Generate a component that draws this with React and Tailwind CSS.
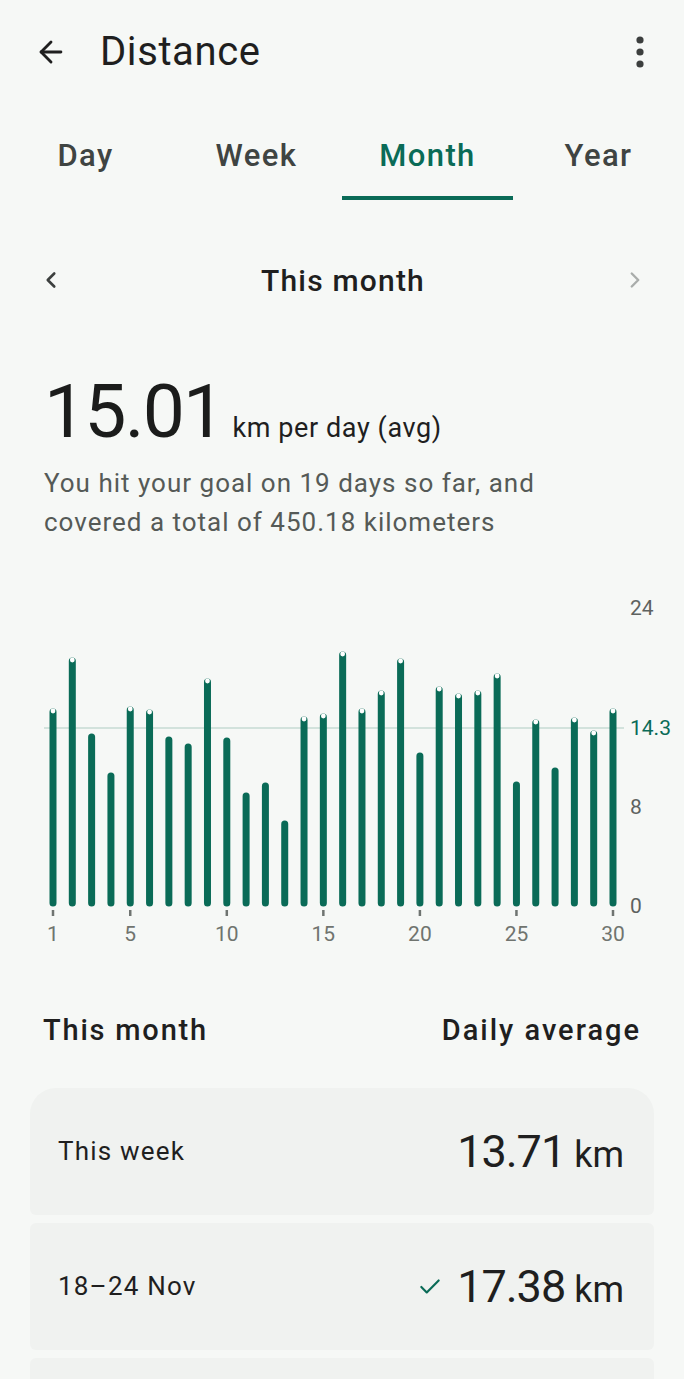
import { ArrowLeft, ChevronLeft, ChevronRight, Check } from 'lucide-react';

const FONT = { fontFamily: 'Roboto, "Open Sans", Arial, sans-serif' };

// tops of each day's bar, in page pixels (0 km sits at y=905)
const tops = [
  709, 658, 734, 773, 707, 710, 737, 744, 679, 738,
  793, 783, 821, 717, 714, 652, 709, 691, 659, 753,
  687, 694, 691, 674, 782, 720, 768, 718, 731, 709,
];
const goalDays = [1, 2, 5, 6, 9, 14, 15, 16, 17, 18, 19, 21, 22, 23, 24, 26, 28, 29, 30];

function Chart() {
  const x = (i) => 53 + i * (560 / 29);
  return (
    <svg width="684" height="360" viewBox="0 590 684 360" className="block">
      <line x1="44" y1="728" x2="624" y2="728" stroke="#d2e2dc" strokeWidth="2" />
      {tops.map((t, i) => (
        <g key={i}>
          <line x1={x(i)} y1="903" x2={x(i)} y2={t + 3} stroke="#0a6b57" strokeWidth="7" strokeLinecap="round" />
          {goalDays.includes(i + 1) && <circle cx={x(i)} cy={t + 2} r="2.4" fill="#ffffff" />}
        </g>
      ))}
      {[1, 5, 10, 15, 20, 25, 30].map((d) => (
        <g key={d}>
          <line x1={x(d - 1)} y1="910" x2={x(d - 1)} y2="916" stroke="#6f7471" strokeWidth="2.5" />
          <text x={x(d - 1)} y="935" textAnchor="middle" dominantBaseline="middle" fontSize="21" fill="#70746f" style={FONT}>
            {d}
          </text>
        </g>
      ))}
      <text x="630" y="609" dominantBaseline="middle" fontSize="21" fill="#5e625f" style={FONT}>24</text>
      <text x="630" y="729" dominantBaseline="middle" fontSize="21" fill="#0a6b57" style={FONT}>14.3</text>
      <text x="630" y="808" dominantBaseline="middle" fontSize="21" fill="#5e625f" style={FONT}>8</text>
      <text x="630" y="907" dominantBaseline="middle" fontSize="21" fill="#5e625f" style={FONT}>0</text>
    </svg>
  );
}

function WeekRow({ label, value, done, top }) {
  return (
    <div
      className={`flex items-center justify-between h-[127px] pl-[28px] pr-[30px] bg-[#f0f2f0] ${
        top ? 'rounded-t-[26px] rounded-b-[6px]' : 'rounded-[6px]'
      }`}
    >
      <span className="text-[26px] tracking-[1.2px] text-[#1f1f1f]">{label}</span>
      {value && (
        <div className="flex items-baseline">
          {done && <Check className="w-[26px] h-[26px] text-[#0a6b57] mr-[14px] self-center" strokeWidth={2} />}
          <span className="text-[45px] text-[#1f1f1f] tracking-[-1px]">{value}</span>
          <span className="text-[36px] text-[#1f1f1f] ml-[9px]">km</span>
        </div>
      )}
    </div>
  );
}

export default function App() {
  const tabs = ['Day', 'Week', 'Month', 'Year'];
  return (
    <div className="min-h-screen bg-[#f6f8f6] overflow-hidden" style={FONT}>
      {/* header */}
      <div className="flex items-center h-[104px] pl-[34px] pr-[40px]">
        <ArrowLeft className="w-[34px] h-[34px] text-[#1f1f1f]" strokeWidth={2} />
        <h1 className="ml-[32px] text-[40px] tracking-[0.6px] text-[#1f1f1f] flex-1">Distance</h1>
        <svg width="8" height="32" viewBox="0 0 8 32">
          <circle cx="4" cy="4" r="3.6" fill="#3c3f3e" />
          <circle cx="4" cy="16" r="3.6" fill="#3c3f3e" />
          <circle cx="4" cy="28" r="3.6" fill="#3c3f3e" />
        </svg>
      </div>

      {/* tabs */}
      <div className="grid grid-cols-4 h-[96px]">
        {tabs.map((t) => (
          <div key={t} className="flex flex-col items-center justify-end">
            <span
              className={`text-[31px] font-medium tracking-[1.4px] leading-none ${
                t === 'Month' ? 'text-[#0a6b57]' : 'text-[#3f4442]'
              }`}
            >
              {t}
            </span>
            <div className={`mt-[25px] h-[4px] w-full ${t === 'Month' ? 'bg-[#0a6b57]' : 'bg-transparent'}`} />
          </div>
        ))}
      </div>

      {/* period nav */}
      <div className="flex items-center justify-between h-[48px] mt-[56px] pl-[38px] pr-[36px]">
        <ChevronLeft className="w-[26px] h-[26px] text-[#3c3f3e]" strokeWidth={2.4} />
        <span className="text-[30px] font-medium tracking-[1.2px] text-[#1f1f1f]">This month</span>
        <ChevronRight className="w-[26px] h-[26px] text-[#a9adab]" strokeWidth={2.2} />
      </div>

      {/* summary */}
      <div className="px-[44px] mt-[70px]">
        <div className="flex items-baseline">
          <span className="text-[75px] leading-none text-[#1b1c1b] tracking-[-1.8px]">15.01</span>
          <span className="ml-[9px] text-[27px] tracking-[0.6px] text-[#1f1f1f]">km per day (avg)</span>
        </div>
        <p className="mt-[15px] text-[26px] leading-[39px] tracking-[1px] text-[#555a57]">
          You hit your goal on 19 days so far, and
          <br />
          covered a total of 450.18 kilometers
        </p>
      </div>

      {/* chart */}
      <div className="mt-[48px]">
        <Chart />
      </div>

      {/* list header */}
      <div className="flex items-center justify-between h-[40px] mt-[61px] px-[43px]">
        <span className="text-[29px] font-medium tracking-[1.8px] text-[#1f1f1f]">This month</span>
        <span className="text-[29px] font-medium tracking-[2px] text-[#1f1f1f]">Daily average</span>
      </div>

      {/* weeks */}
      <div className="mt-[37px] mx-[30px] flex flex-col gap-[8px]">
        <WeekRow label="This week" value="13.71" top />
        <WeekRow label="18–24 Nov" value="17.38" done />
        <WeekRow label="" />
      </div>
    </div>
  );
}
